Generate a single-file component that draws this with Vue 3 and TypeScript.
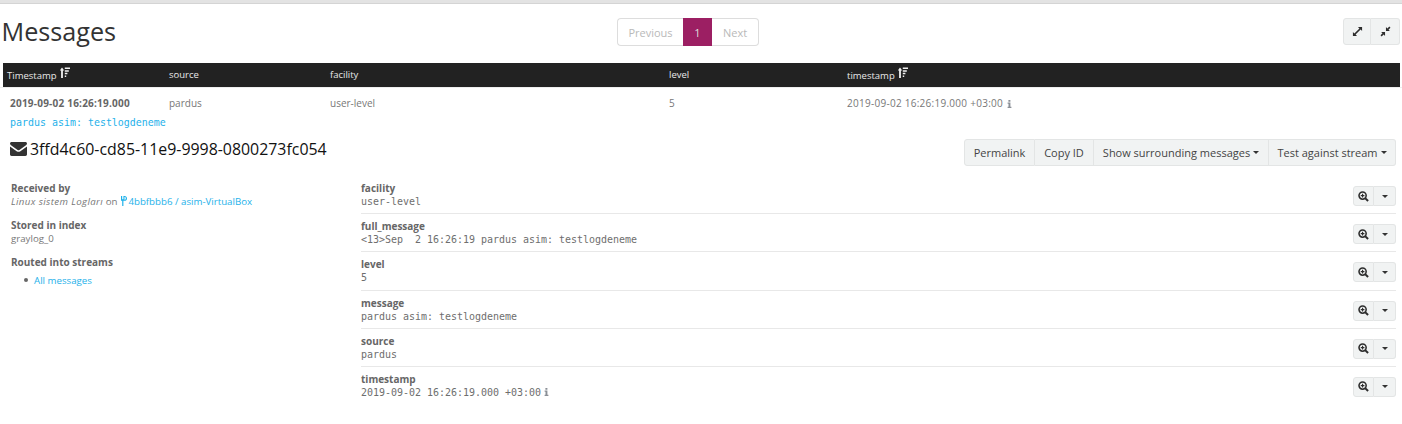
<script setup lang="ts">
const cols = [
  { name: 'Timestamp', w: 162, sort: true },
  { name: 'source', w: 161, sort: false },
  { name: 'facility', w: 339, sort: false },
  { name: 'level', w: 178, sort: false },
  { name: 'timestamp', w: 550, sort: true },
]
const fields = [
  { k: 'facility', v: 'user-level' },
  { k: 'full_message', v: '<13>Sep  2 16:26:19 pardus asim: testlogdeneme' },
  { k: 'level', v: '5' },
  { k: 'message', v: 'pardus asim: testlogdeneme' },
  { k: 'source', v: 'pardus' },
  { k: 'timestamp', v: '2019-09-02 16:26:19.000 +03:00', info: true },
]
</script>

<template>
  <div class="page">
    <div class="topbar"></div>
    <div class="head">
      <h1>Messages</h1>
      <div class="pager">
        <span class="pg first">Previous</span>
        <span class="pg active">1</span>
        <span class="pg last">Next</span>
      </div>
      <div class="btns expand">
        <button class="btn sq">
          <svg width="11" height="11" viewBox="0 0 12 12"><path d="M1 11V6.5L2.6 8.1 8.1 2.6 6.5 1H11V5.5L9.4 3.9 3.9 9.4 5.5 11Z" fill="#2d2d2d"/></svg>
        </button>
        <button class="btn sq">
          <svg width="11" height="11" viewBox="0 0 12 12"><path d="M6.5 5.5V1.2L8 2.7 10.2.6 11.4 1.8 9.3 4 10.8 5.5ZM5.5 6.5V10.8L4 9.3 1.8 11.4.6 10.2 2.7 8 1.2 6.5Z" fill="#2d2d2d"/></svg>
        </button>
      </div>
    </div>

    <div class="thead">
      <div v-for="c in cols" :key="c.name" class="th" :style="{ width: c.w + 'px' }">
        {{ c.name }}
        <svg v-if="c.sort" class="sort" width="10" height="11" viewBox="0 0 10 11"><path d="M2 .5 4.2 3.4H2.9V11H1.1V3.4H-.2ZM4.8 .6H10V2.1H4.8ZM4.8 3.2H8.8V4.7H4.8ZM4.8 5.8H7.4V7.3H4.8ZM4.8 8.4H6.2V9.9H4.8Z" fill="#f2f2f2"/></svg>
      </div>
    </div>

    <div class="row">
      <div class="td ts" style="width: 159px">2019-09-02 16:26:19.000</div>
      <div class="td" style="width: 161px">pardus</div>
      <div class="td" style="width: 339px">user-level</div>
      <div class="td" style="width: 178px">5</div>
      <div class="td tz">2019-09-02 16:26:19.000 +03:00
        <svg class="info" width="5" height="8" viewBox="0 0 5 8"><path d="M1.4 0H3.4V1.7H1.4ZM.6 2.6H3.4V6.8H4.4V8H.6V6.8H1.5V3.8H.6Z" fill="#8a8f96"/></svg>
      </div>
    </div>
    <div class="msg">pardus asim: testlogdeneme</div>

    <div class="idrow">
      <h3>
        <svg class="env" width="17" height="14" viewBox="0 0 17 14"><path d="M1.6 0H15.4C16.3 0 17 .7 17 1.6 17 2.3 16.5 2.9 16 3.3L9.4 7.9C8.8 8.3 8.2 8.3 7.6 7.9L1 3.3C.5 2.9 0 2.3 0 1.6 0 .7.7 0 1.6 0ZM0 4.6 7 9.4C8 10 9 10 10 9.4L17 4.6V12.3C17 13.2 16.3 14 15.4 14H1.6C.7 14 0 13.2 0 12.3Z" fill="#333"/></svg>
        3ffd4c60-cd85-11e9-9998-0800273fc054
      </h3>
      <div class="btns actions">
        <button class="btn">Permalink</button>
        <button class="btn">Copy ID</button>
        <button class="btn">Show surrounding messages <span class="caret"></span></button>
        <button class="btn">Test against stream <span class="caret"></span></button>
      </div>
    </div>

    <div class="detail">
      <div class="meta">
        <div class="dt">Received by</div>
        <div class="dd"><em>Linux sistem Logları</em> on <a class="lnk"><svg class="node" width="7" height="10" viewBox="0 0 7 10"><path d="M1 0H2.2V3.2H3.4V0H4.6C6 0 7 .9 7 2.4 7 3.9 6 4.8 4.6 4.8H3.4V10H2.2V4.8H1ZM4.5 1.1V3.7C5.3 3.7 5.8 3.2 5.8 2.4 5.8 1.6 5.3 1.1 4.5 1.1Z" fill="#1eb1ea"/></svg> 4bbfbbb6 / asim-VirtualBox</a></div>
        <div class="dt">Stored in index</div>
        <div class="dd">graylog_0</div>
        <div class="dt">Routed into streams</div>
        <ul><li><a class="lnk">All messages</a></li></ul>
      </div>
      <div class="fields">
        <div v-for="f in fields" :key="f.k" class="field">
          <div class="ftext">
            <div class="fk">{{ f.k }}</div>
            <div class="fv">{{ f.v }}<svg v-if="f.info" class="info fvi" width="5" height="8" viewBox="0 0 5 8"><path d="M1.4 0H3.4V1.7H1.4ZM.6 2.6H3.4V6.8H4.4V8H.6V6.8H1.5V3.8H.6Z" fill="#8a8f96"/></svg></div>
          </div>
          <div class="btns mini">
            <button class="btn ic">
              <svg width="11" height="11" viewBox="0 0 12 12"><circle cx="5" cy="5" r="3.9" fill="none" stroke="#2d2d2d" stroke-width="1.7"/><path d="M3 5H7M5 3V7" stroke="#2d2d2d" stroke-width="1.2"/><path d="M7.8 7.8 11 11" stroke="#2d2d2d" stroke-width="2.2"/></svg>
            </button>
            <button class="btn ic"><span class="caret"></span></button>
          </div>
        </div>
      </div>
    </div>
  </div>
</template>

<style>
html, body { margin: 0; background: #fff; }
</style>

<style scoped>
.page {
  width: 1402px;
  height: 424px;
  overflow: hidden;
  font-family: "Open Sans", sans-serif;
  font-size: 10px;
  color: #666;
  background: #fff;
}
.topbar { height: 3px; background: #e3e3e3; border-bottom: 1px solid #d4d4d4; }
.head {
  position: relative;
  height: 59px;
  display: flex;
  align-items: flex-start;
  padding-left: 1.5px;
}
h1 {
  margin: 11px 0 0;
  font-size: 25.2px;
  line-height: 32px;
  font-weight: 400;
  color: #333;
}
.pager {
  position: absolute;
  left: 617px;
  top: 14px;
  display: flex;
  height: 28px;
  font-size: 11px;
}
.pg {
  display: flex;
  align-items: center;
  justify-content: center;
  box-sizing: border-box;
  color: #b9b9b9;
  border: 1px solid #ddd;
}
.first { width: 66px; border-radius: 4px 0 0 4px; border-right: 0; }
.active { width: 29px; background: #9c1f63; border-color: #9c1f63; color: #ddd; }
.last { width: 47px; border-radius: 0 4px 4px 0; border-left: 0; }
.btns { display: flex; }
.btn {
  font-family: inherit;
  margin: 0;
  padding: 0;
  height: 27px;
  border: 1px solid #e3e5e5;
  border-left-width: 0;
  background: #f1f3f3;
  color: #444;
  font-size: 11px;
  display: flex;
  align-items: center;
  justify-content: center;
  gap: 3px;
  box-sizing: border-box;
}
.btn:first-child { border-left-width: 1px; border-radius: 3px 0 0 3px; }
.btn:last-child { border-radius: 0 3px 3px 0; }
.expand { position: absolute; right: 2px; top: 14px; }
.sq { width: 29px; }
.sq:first-child { width: 28px; }
.thead {
  margin-left: 3px;
  width: 1397px;
  height: 24px;
  background: #222;
  display: flex;
  align-items: center;
  box-sizing: border-box;
  padding-left: 4px;
  padding-bottom: 1px;
  color: #e9e9e9;
  font-size: 9.5px;
}
.th { flex: none; position: relative; }
.sort { margin-left: 1px; position: relative; top: -1px; }
.row {
  display: flex;
  padding: 9px 0 0 10px;
  height: 22px;
  line-height: 13px;
  color: #777;
  border-top: 1px solid #eee;
}
.td { flex: none; }
.ts { font-weight: 700; color: #666; letter-spacing: 0.22px; }
.tz { letter-spacing: 0.27px; }
.info { margin-left: 1px; vertical-align: -0.5px; }
.fvi { margin-left: 3px; }
.msg {
  margin-left: 10px;
  font-family: "DejaVu Sans Mono", monospace;
  font-size: 9.96px;
  line-height: 14px;
  margin-top: -3px;
  color: #1eb1ea;
}
.idrow {
  position: relative;
  height: 46px;
  padding-left: 10px;
  box-sizing: border-box;
}
h3 {
  margin: 0;
  padding-top: 8px;
  font-size: 15.9px;
  line-height: 22px;
  font-weight: 400;
  color: #111;
  display: flex;
  align-items: center;
}
.env { margin-right: 3px; }
.actions { position: absolute; right: 6px; top: 9px; }
.actions .btn:nth-child(1) { width: 71px; }
.actions .btn:nth-child(2) { width: 59px; }
.actions .btn:nth-child(3) { width: 175px; }
.actions .btn:nth-child(4) { width: 127px; }
.caret {
  display: inline-block;
  width: 0;
  height: 0;
  border-top: 3px solid #333;
  border-left: 3px solid transparent;
  border-right: 3px solid transparent;
}
.detail { display: flex; padding-left: 11px; }
.meta { width: 350px; flex: none; padding-top: 5px; }
.dt { font-weight: 700; font-size: 10px; line-height: 14px; color: #666; }
.dd { font-size: 9.7px; line-height: 13px; margin-bottom: 10px; color: #777; }
.dd em { letter-spacing: 0.38px; }
.lnk { color: #1eb1ea; }
.node { vertical-align: -1px; margin-right: -1px; }
ul { margin: 5px 0 0; padding: 0 0 0 23px; font-size: 9.7px; line-height: 13px; list-style: none; }
li { position: relative; }
li::before {
  content: "";
  position: absolute;
  left: -10px;
  top: 4px;
  width: 4px;
  height: 4px;
  border-radius: 50%;
  background: #666;
}
.fields { width: 1035px; flex: none; }
.field {
  height: 38.2px;
  box-sizing: border-box;
  display: flex;
  justify-content: space-between;
  border-bottom: 1px solid #e8e8e8;
}
.field:last-child { border-bottom: 0; }
.ftext { padding-top: 5px; }
.fk { font-weight: 700; font-size: 10px; line-height: 14px; color: #666; margin-bottom: 1px; }
.fv { font-family: "DejaVu Sans Mono", monospace; font-size: 9.98px; line-height: 12px; color: #6e6e6e; white-space: pre; }
.mini { margin-top: 10px; }
.ic { height: 20px; width: 21px; }
.ic:last-child { width: 22px; }
</style>
